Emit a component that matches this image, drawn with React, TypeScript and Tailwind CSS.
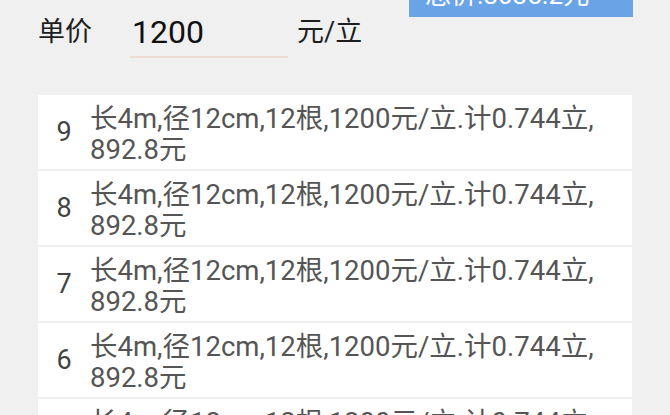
const rows = [9, 8, 7, 6, 5, 4, 3, 2, 1];

const font = { fontFamily: 'Roboto, "Noto Sans CJK SC", sans-serif' };

export default function App() {
  return (
    <div className="h-[415px] w-[670px] overflow-hidden bg-[#f0f0f0]" style={font}>
      {/* total price button, mostly scrolled off the top */}
      <div className="flex justify-end pr-[37px]">
        <div className="-mt-[27px] flex h-[44px] w-[224px] items-center bg-[#6ba4e6] pl-[16px] text-[26px] leading-none text-white">
          总价:8035.2元
        </div>
      </div>

      <div className="-mt-[7px] flex h-[48px] items-start pl-[38px] text-[27px] leading-[44px] text-[#1e1e1e]">
        <span>单价</span>
        <div className="ml-[38px] h-[48px] w-[158px] border-b-2 border-[#f2dccf] pl-[2px] text-[32px] leading-[44px] text-[#111]">
          1200
        </div>
        <span className="ml-[9px]">元/立</span>
      </div>

      <div className="mx-[38px] mt-[37px] flex flex-col gap-[2px]">
        {rows.map((n) => (
          <div key={n} className="flex h-[74px] items-center bg-white">
            <div className="w-[52px] text-center text-[27px] text-[#444]">{n}</div>
            <div className="pt-[3px] text-[27.5px] leading-[31px] whitespace-nowrap text-[#555]">
              长4m,径12cm,12根,1200元/立.计0.744立,
              <br />
              892.8元
            </div>
          </div>
        ))}
      </div>
    </div>
  );
}
